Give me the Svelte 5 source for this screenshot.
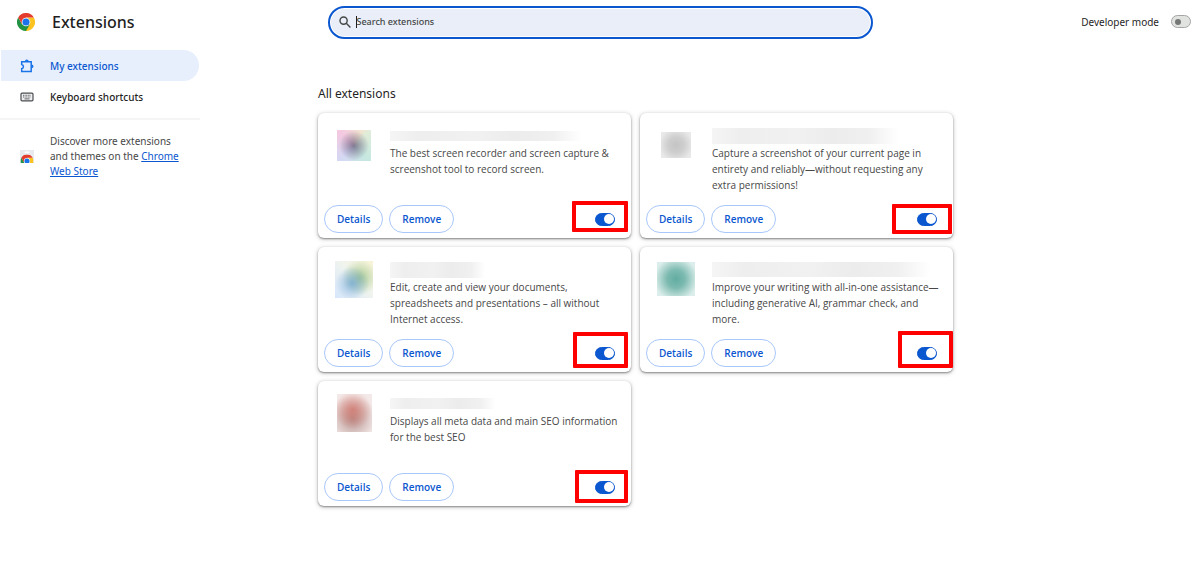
<script>
  let query = $state('');
  let developerMode = $state(false);

  let extensions = $state([
    {
      id: 'recorder',
      description: 'The best screen recorder and screen capture & screenshot tool to record screen.',
      tone: 'spectrum',
      icon: [34, 31],
      title: [192, 10],
      mark: [254, 88, 56, 31],
      enabled: true
    },
    {
      id: 'capture',
      description: 'Capture a screenshot of your current page in entirety and reliably—without requesting any extra permissions!',
      tone: 'grey',
      icon: [30, 26],
      title: [186, 16],
      mark: [252, 91, 60, 30],
      enabled: true
    },
    {
      id: 'documents',
      description: 'Edit, create and view your documents, spreadsheets and presentations – all without Internet access.',
      tone: 'meadow',
      icon: [38, 37],
      title: [95, 16],
      mark: [255, 85, 55, 36],
      enabled: true
    },
    {
      id: 'writing',
      description: 'Improve your writing with all-in-one assistance—including generative AI, grammar check, and more.',
      tone: 'teal',
      icon: [38, 34],
      title: [218, 15],
      mark: [258, 84, 55, 37],
      enabled: true
    },
    {
      id: 'seo',
      description: 'Displays all meta data and main SEO information for the best SEO',
      tone: 'red',
      icon: [35, 38],
      title: [106, 11],
      mark: [257, 89, 53, 33],
      enabled: true
    }
  ]);
</script>

{#snippet chromeLogo()}
  <path d="M24 24 L44.8 12 A24 24 0 0 1 24 48 Z" fill="#fcc31e" />
  <path d="M24 12 H44.8 L34.4 30 L24 48 Z" fill="#fcc31e" />
  <path d="M13.6 30 L3.2 12 A24 24 0 0 0 24 48 L34.4 30 Z" fill="#229342" />
  <path d="M3.2 12 A24 24 0 0 1 44.8 12 H24 L13.6 30 Z" fill="#e33b2e" />
  <circle cx="24" cy="24" r="11.5" fill="#fff" />
  <circle cx="24" cy="24" r="9.5" fill="#1a73e8" />
{/snippet}

<div class="page">
  <header>
    <div class="brand">
      <svg class="logo" viewBox="0 0 48 48" aria-hidden="true">{@render chromeLogo()}</svg>
      <h1>Extensions</h1>
    </div>
    <label class="search">
      <svg viewBox="0 0 12 12" aria-hidden="true">
        <circle cx="4.6" cy="4.6" r="3.6" />
        <path d="M7.3 7.3 L11.4 11.4" />
      </svg>
      <span class="caret"></span>
      <input type="text" placeholder="Search extensions" aria-label="Search extensions" bind:value={query} />
    </label>
    <label class="developer">
      <span>Developer mode</span>
      <input class="toggle" type="checkbox" role="switch" bind:checked={developerMode} />
    </label>
  </header>

  <div class="body">
    <aside>
      <nav>
        <a class="item selected" href="#extensions">
          <svg viewBox="0 0 14 14" aria-hidden="true">
            <path class="puzzle" d="M1.7 2.8 H11.2 V12.6 H1.7 V9.7 C4 9.2 4 5.9 1.7 5.4 Z" />
            <path d="M4.9 2.4 A1.9 1.9 0 0 1 8.7 2.4 Z M11.6 5.4 A1.9 1.9 0 0 1 11.6 9.2 Z" fill="currentColor" />
          </svg>
          My extensions
        </a>
        <a class="item" href="#shortcuts">
          <svg viewBox="0 0 14 14" aria-hidden="true">
            <rect x="1" y="3.2" width="12" height="7.6" rx="1" fill="#eee" stroke="#4a4d51" stroke-width="1.2" />
            <path d="M3 5.3 H11 M3 7 H11" stroke="#5f6368" stroke-width="1" stroke-dasharray="1 .6" />
            <path d="M4.5 8.9 H9.5" stroke="#5f6368" stroke-width="1" />
          </svg>
          Keyboard shortcuts
        </a>
      </nav>
      <div class="discover">
        <svg viewBox="0 0 14 14" aria-hidden="true">
          <rect width="14" height="13" fill="#e8eaed" />
          <rect x="4.5" y="1.5" width="5" height="1.5" rx=".7" fill="#fff" />
          <svg x=".5" y="4.5" width="13" height="8.5" viewBox="0 0 48 31.4">{@render chromeLogo()}</svg>
        </svg>
        <p>Discover more extensions and themes on the <a href="#store">Chrome Web Store</a></p>
      </div>
    </aside>

    <main id="extensions">
      <h2>All extensions</h2>
      <div class="cards">
        {#each extensions as ext (ext.id)}
          <article>
            <div class="info">
              <div class="picture">
                <span class={ext.tone} style="width: {ext.icon[0]}px; height: {ext.icon[1]}px"></span>
              </div>
              <div class="text">
                <div class="name">
                  <span style="width: {ext.title[0]}px; height: {ext.title[1]}px"></span>
                </div>
                <p>{ext.description}</p>
              </div>
            </div>
            <div class="actions">
              <button type="button">Details</button>
              <button type="button">Remove</button>
              <input class="toggle" type="checkbox" role="switch" aria-label="Enabled" bind:checked={ext.enabled} />
            </div>
            <span
              class="mark"
              style="left: {ext.mark[0]}px; top: {ext.mark[1]}px; width: {ext.mark[2]}px; height: {ext.mark[3]}px"
            ></span>
          </article>
        {/each}
      </div>
    </main>
  </div>
</div>

<style>
  :global(body) {
    background: #fff;
  }

  .page,
  .page * {
    box-sizing: border-box;
  }

  .page {
    font-family: 'Noto Sans', 'Open Sans', sans-serif;
    font-size: 10px;
    color: #1f1f1f;
  }

  h1,
  h2,
  p {
    margin: 0;
    font-weight: 400;
  }

  header {
    display: grid;
    grid-template-columns: 1fr minmax(0, 545px) 1fr;
    align-items: center;
    padding-top: 6px;
  }

  .brand {
    display: flex;
    align-items: center;
    gap: 17px;
    padding: 0 0 1px 17px;
  }

  .logo {
    width: 18px;
    height: 18px;
  }

  h1 {
    font-size: 16px;
    line-height: 24px;
    font-weight: 500;
  }

  .search {
    display: flex;
    align-items: center;
    height: 33px;
    padding: 0 12px 2px 9px;
    border: 2px solid #0b57d0;
    border-radius: 17px;
    background: #e9eef8;
    box-shadow: inset 0 0 0 1px #fff;
  }

  .search svg {
    width: 12px;
    height: 12px;
    margin-right: 5px;
    fill: none;
    stroke: #444746;
    stroke-width: 1.4;
  }

  .caret {
    width: 1px;
    height: 12px;
    background: #1f1f1f;
  }

  .search input {
    flex: 1;
    min-width: 0;
    padding: 0;
    border: 0;
    outline: 0;
    background: none;
    font: 500 9px 'Noto Sans', 'Open Sans', sans-serif;
    color: inherit;
  }

  .search input::placeholder {
    color: #444746;
    opacity: 1;
  }

  .developer {
    display: flex;
    align-items: center;
    justify-content: flex-end;
    gap: 12px;
    padding: 0 9px 2px 0;
  }

  .toggle {
    appearance: none;
    display: flex;
    align-items: center;
    flex: none;
    width: 20px;
    height: 13px;
    margin: 0;
    padding: 0 3px;
    border: 1px solid #a3a6a4;
    border-radius: 7px;
    background: #e1e3e1;
  }

  .toggle::before {
    content: '';
    width: 6px;
    height: 6px;
    border-radius: 50%;
    background: #747775;
  }

  .toggle:checked {
    justify-content: flex-end;
    padding: 0;
    border-color: #0b57d0;
    background: #0b57d0;
  }

  .toggle:checked::before {
    width: 10px;
    height: 10px;
    background: #fff;
  }

  .body {
    display: grid;
    grid-template-columns: 200px 1fr;
  }

  aside {
    padding-top: 11px;
  }

  nav {
    padding: 0 1px 6px;
    border-bottom: 2px solid #f5f5f6;
  }

  .item {
    display: flex;
    align-items: center;
    gap: 16px;
    height: 31px;
    padding-left: 19px;
    border-radius: 0 16px 16px 0;
    font-weight: 500;
    color: #1f1f1f;
    text-decoration: none;
  }

  .item svg,
  .discover svg {
    flex: none;
    width: 14px;
    height: 14px;
  }

  .discover svg svg {
    width: 13px;
    height: 8.5px;
  }

  .selected {
    background: #e7effd;
    color: #0b57d0;
  }

  .selected svg {
    color: #1a73e8;
  }

  .puzzle {
    fill: none;
    stroke: currentColor;
    stroke-width: 1.5;
  }

  .discover {
    display: flex;
    align-items: center;
    gap: 16px;
    padding: 14px 14px 0 20px;
    line-height: 15px;
    color: #474747;
  }

  .discover a {
    color: #0b57d0;
  }

  main {
    padding: 46px 20px 70px 118px;
  }

  h2 {
    font-size: 12px;
    line-height: 18px;
  }

  .cards {
    display: grid;
    grid-template-columns: repeat(auto-fill, 313px);
    gap: 9px;
    max-width: 640px;
    padding-top: 10px;
  }

  article {
    position: relative;
    display: flex;
    flex-direction: column;
    justify-content: space-between;
    min-height: 125px;
    padding-bottom: 5px;
    border-radius: 6px;
    background: #fff;
    box-shadow:
      0 1px 2px rgba(0, 0, 0, 0.4),
      0 1px 4px 1px rgba(0, 0, 0, 0.14);
  }

  .info {
    display: flex;
  }

  .picture {
    display: flex;
    align-items: center;
    justify-content: center;
    flex: none;
    width: 72px;
    height: 64px;
  }

  .spectrum {
    background:
      radial-gradient(circle, rgba(100, 90, 120, 0.75), transparent 65%),
      conic-gradient(from 45deg, #e0ecd8, #c6e8e0 25%, #d5d8f4 50%, #f4c8e0 75%, #f2e4d0 95%, #e0ecd8);
  }

  .grey {
    background: radial-gradient(circle, #c4c4c4, #cecece 40%, #e9e9e9 85%);
  }

  .meadow {
    background:
      radial-gradient(circle at 45% 60%, rgba(110, 165, 215, 0.75), transparent 55%),
      radial-gradient(circle at 65% 45%, rgba(150, 190, 120, 0.8), transparent 55%),
      linear-gradient(45deg, #d6e6fc, #f0f4ee 55%, #f7f3d4);
  }

  .teal {
    background: radial-gradient(circle, #62aca1, #7cbab0 35%, #dceeeb 85%);
  }

  .red {
    background:
      radial-gradient(circle at 45% 42%, rgba(212, 110, 100, 0.7), transparent 65%),
      radial-gradient(circle at 45% 65%, rgba(150, 100, 95, 0.7), #f3e9e8 75%);
  }

  .text {
    flex: 1;
    min-width: 0;
    padding: 13px 10px 0 0;
  }

  .name {
    display: flex;
    align-items: center;
    height: 19px;
  }

  .name span {
    background: linear-gradient(90deg, #f5f5f5, #eeeeee 15%, #f1f1f1 45%, #ececec 65%, #f0f0f0 85%, #fff);
  }

  .text p {
    font-family: 'Open Sans', 'Noto Sans', sans-serif;
    line-height: 16px;
    color: #474747;
  }

  .actions {
    display: flex;
    align-items: center;
    gap: 6px;
    padding: 0 16px 0 6px;
  }

  .actions .toggle {
    margin-left: auto;
  }

  button {
    height: 28px;
    padding: 0 12px;
    border: 1px solid #a8c7fa;
    border-radius: 14px;
    background: #fff;
    font: 600 10px 'Open Sans', 'Noto Sans', sans-serif;
    color: #0b57d0;
  }

  .mark {
    position: absolute;
    border: 4px solid #fe0000;
    border-radius: 1px;
    pointer-events: none;
  }
</style>
